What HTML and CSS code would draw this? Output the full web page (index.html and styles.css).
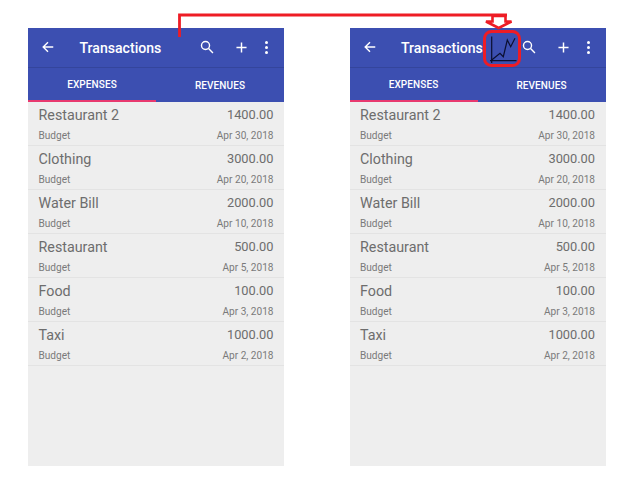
FILE: index.html
```html
<!DOCTYPE html>
<html lang="en">
<head>
<meta charset="utf-8">
<title>Transactions</title>
<link rel="stylesheet" href="styles.css">
</head>
<body>
<main class="stage">
  <section class="phone">
    <header class="toolbar">
      <svg class="ico back" viewBox="0 0 16 16"><path d="M14 8H2.500M8 2.500 2.500 8 8 13.500"/></svg>
      <h1 class="title">Transactions</h1>
      <svg class="ico search" viewBox="0 0 16 16"><circle cx="6.300" cy="6.300" r="4.600"/><path d="m9.800 9.800 5 5"/></svg>
      <svg class="ico plus" viewBox="0 0 12 12"><path d="M6 .5v11M.5 6h11"/></svg>
      <span class="dots"><i></i><i></i><i></i></span>
    </header>
    <nav class="tabs"><span class="tab active">EXPENSES</span><span class="tab">REVENUES</span></nav>
    <ul class="list">
      <li class="row"><div class="line"><span class="name">Restaurant 2</span><span class="amount">1400.00</span></div><div class="line sub"><span>Budget</span><span>Apr 30, 2018</span></div></li>
      <li class="row"><div class="line"><span class="name">Clothing</span><span class="amount">3000.00</span></div><div class="line sub"><span>Budget</span><span>Apr 20, 2018</span></div></li>
      <li class="row"><div class="line"><span class="name">Water Bill</span><span class="amount">2000.00</span></div><div class="line sub"><span>Budget</span><span>Apr 10, 2018</span></div></li>
      <li class="row"><div class="line"><span class="name">Restaurant</span><span class="amount">500.00</span></div><div class="line sub"><span>Budget</span><span>Apr 5, 2018</span></div></li>
      <li class="row"><div class="line"><span class="name">Food</span><span class="amount">100.00</span></div><div class="line sub"><span>Budget</span><span>Apr 3, 2018</span></div></li>
      <li class="row"><div class="line"><span class="name">Taxi</span><span class="amount">1000.00</span></div><div class="line sub"><span>Budget</span><span>Apr 2, 2018</span></div></li>
    </ul>
  </section>
  <section class="phone">
    <header class="toolbar">
      <svg class="ico back" viewBox="0 0 16 16"><path d="M14 8H2.500M8 2.500 2.500 8 8 13.500"/></svg>
      <h1 class="title">Transactions</h1>
      <svg class="ico search" viewBox="0 0 16 16"><circle cx="6.300" cy="6.300" r="4.600"/><path d="m9.800 9.800 5 5"/></svg>
      <svg class="ico plus" viewBox="0 0 12 12"><path d="M6 .5v11M.5 6h11"/></svg>
      <span class="dots"><i></i><i></i><i></i></span>
    </header>
    <nav class="tabs"><span class="tab active">EXPENSES</span><span class="tab">REVENUES</span></nav>
    <ul class="list">
      <li class="row"><div class="line"><span class="name">Restaurant 2</span><span class="amount">1400.00</span></div><div class="line sub"><span>Budget</span><span>Apr 30, 2018</span></div></li>
      <li class="row"><div class="line"><span class="name">Clothing</span><span class="amount">3000.00</span></div><div class="line sub"><span>Budget</span><span>Apr 20, 2018</span></div></li>
      <li class="row"><div class="line"><span class="name">Water Bill</span><span class="amount">2000.00</span></div><div class="line sub"><span>Budget</span><span>Apr 10, 2018</span></div></li>
      <li class="row"><div class="line"><span class="name">Restaurant</span><span class="amount">500.00</span></div><div class="line sub"><span>Budget</span><span>Apr 5, 2018</span></div></li>
      <li class="row"><div class="line"><span class="name">Food</span><span class="amount">100.00</span></div><div class="line sub"><span>Budget</span><span>Apr 3, 2018</span></div></li>
      <li class="row"><div class="line"><span class="name">Taxi</span><span class="amount">1000.00</span></div><div class="line sub"><span>Budget</span><span>Apr 2, 2018</span></div></li>
    </ul>
  </section>
  <svg class="annotation" viewBox="0 0 640 495" aria-hidden="true">
    <path class="connector" d="M179.500 37V15H507"/>
    <path class="arrow" d="M492.500 16V21.500H486L498.700 28L511.500 21.500H505.500V16Z"/>
    <rect class="callout" x="484.500" y="31.500" width="35" height="34" rx="7"/>
    <path class="chart" d="M491.700 36.500V63M490 60.700H516.500"/>
    <path class="chart" d="M491.700 60L500 53.300L503.300 56.700L507.300 40L510.700 46.700L515 38.300"/>
  </svg>
</main>
</body>
</html>
```
FILE: styles.css
```css
* { box-sizing: border-box; }
html, body { margin: 0; background: #fff; }
.stage {
  position: relative;
  width: 640px;
  height: 495px;
  display: flex;
  gap: 65.5px;
  padding: 28px 0 0 28px;
  font-family: Roboto, "Liberation Sans", sans-serif;
  overflow: hidden;
}
.phone {
  width: 256px;
  height: 437.5px;
  background: #eeeeee;
  display: flex;
  flex-direction: column;
}
.toolbar {
  height: 39.5px;
  flex: none;
  display: flex;
  align-items: center;
  background: #3c4fb1;
  color: #fff;
  border-bottom: 1px solid #34459c;
}
.ico { fill: none; stroke: #fff; stroke-width: 1.6; flex: none; }
.back { width: 14px; height: 14px; margin-left: 13px; }
.title { margin: 2px 0 0 24.500px; font-size: 14.100px; font-weight: 500; width: 107.500px; white-space: nowrap; }
.search { width: 14px; height: 14px; margin-left: 13px; }
.plus { width: 11px; height: 11px; margin-left: 22px; }
.dots { display: flex; flex-direction: column; gap: 2px; margin-left: 18px; }
.dots i { display: block; width: 3px; height: 3px; border-radius: 50%; background: #fff; }
.tabs {
  height: 34px;
  flex: none;
  display: flex;
  background: #3c4fb1;
}
.tab {
  flex: 1;
  display: flex;
  align-items: center;
  justify-content: center;
  color: #fff;
  font-size: 10px;
  font-weight: 500;
  padding-top: 2.500px;
  letter-spacing: .1px;
}
.tab.active { border-bottom: 2px solid #e8396f; }
.list { list-style: none; margin: 0; padding: 0; }
.row {
  height: 44px;
  padding: 3.500px 10.500px 0;
  border-bottom: 1px solid #e3e3e3;
}
.line { display: flex; justify-content: space-between; align-items: baseline; }
.name { font-size: 14.300px; line-height: 21px; color: #6d6d6d; }
.amount { font-size: 12.800px; line-height: 20px; color: #6d6d6d; position: relative; top: -1px; }
.sub { font-size: 10.100px; line-height: 14px; margin-top: 3px; color: #7a7a7a; }
.annotation { position: absolute; inset: 0; width: 640px; height: 495px; pointer-events: none; }
.connector { fill: none; stroke: #ee1c25; stroke-width: 2.800; }
.arrow { fill: #fff; stroke: #ee1c25; stroke-width: 2.600; }
.callout { fill: none; stroke: #ee1c25; stroke-width: 3; }
.chart { fill: none; stroke: #0b0f30; stroke-width: 1.200; }
```
